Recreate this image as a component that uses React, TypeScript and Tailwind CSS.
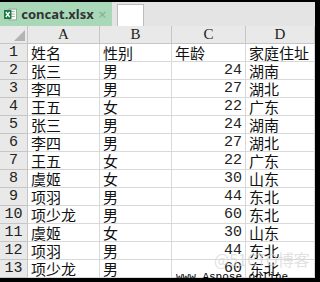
const rows: [string, string, string, string][] = [
  ["张三", "男", "24", "湖南"],
  ["李四", "男", "27", "湖北"],
  ["王五", "女", "22", "广东"],
  ["张三", "男", "24", "湖南"],
  ["李四", "男", "27", "湖北"],
  ["王五", "女", "22", "广东"],
  ["虞姬", "女", "30", "山东"],
  ["项羽", "男", "44", "东北"],
  ["项少龙", "男", "60", "东北"],
  ["虞姬", "女", "30", "山东"],
  ["项羽", "男", "44", "东北"],
  ["项少龙", "男", "60", "东北"],
];

const cjk = "font-['Noto_Sans_CJK_SC',sans-serif] text-[15px] leading-none text-[#111]";
const mono = "font-[Liberation_Mono,monospace] text-[15px] leading-none text-[#222]";
const serif = "font-[Liberation_Serif,serif] text-[15px] leading-none text-[#222]";
const grid = "grid grid-cols-[28px_72px_72px_74px_1fr]";

function ExcelIcon() {
  return (
    <svg width="16" height="15" viewBox="0 0 16 15">
      <rect x="6" y="1" width="9" height="13" fill="#fff" stroke="#8a9a8f" strokeWidth="1" />
      <line x1="8" y1="4" x2="13" y2="4" stroke="#7aa88a" />
      <line x1="8" y1="7" x2="13" y2="7" stroke="#7aa88a" />
      <line x1="8" y1="10" x2="13" y2="10" stroke="#7aa88a" />
      <rect x="0" y="2" width="9" height="11" fill="#1f7a45" />
      <path d="M2.2 4.5 L6.8 10.5 M6.8 4.5 L2.2 10.5" stroke="#fff" strokeWidth="1.6" />
    </svg>
  );
}

function RowHead({ n }: { n: number }) {
  return (
    <div className={`flex items-center justify-center bg-[#e9e9e9] border-r border-b border-[#c6c6c6] ${mono}`}>
      {n}
    </div>
  );
}

function Cell({ children, right, cls }: { children: React.ReactNode; right?: boolean; cls: string }) {
  return (
    <div className={`flex items-center border-r border-b border-[#d9d9d9] bg-white ${right ? "justify-end pr-[3px]" : "pl-[3px]"} ${cls}`}>
      {children}
    </div>
  );
}

export default function App() {
  return (
    <div className="relative w-[320px] h-[282px] overflow-hidden bg-white border-t-2 border-r-[5px] border-b-4 border-black">
      {/* tab strip */}
      <div className="h-[24px] flex items-end bg-[#e4e4e4]">
        <div className="h-[24px] w-[112px] flex items-center gap-[4px] pl-[4px] bg-[#a8d8b8]">
          <ExcelIcon />
          <span className="font-['Noto_Sans',sans-serif] font-bold text-[13px] text-[#333] leading-none">concat.xlsx</span>
          <span className="ml-auto mr-[5px] text-[11px] text-[#8fb09b] font-bold leading-none font-['DejaVu_Sans',sans-serif]">×</span>
        </div>
        <div className="ml-[5px] h-[22px] w-[27px] bg-white border border-b-0 border-[#bcbcbc]" />
      </div>

      {/* column headers */}
      <div className={`${grid} h-[18px]`}>
        <div className="relative bg-[#e9e9e9] border-r border-b border-[#c6c6c6]">
          <div className="absolute right-[2px] bottom-[2px] w-0 h-0 border-l-[11px] border-l-transparent border-b-[11px] border-b-[#b4b4b4]" />
        </div>
        {["A", "B", "C", "D"].map(c => (
          <div key={c} className={`flex items-center justify-center bg-[#e9e9e9] border-r border-b border-[#c6c6c6] ${serif}`}>
            {c}
          </div>
        ))}
      </div>

      {/* row 1 */}
      <div className={`${grid} h-[18px]`}>
        <RowHead n={1} />
        <Cell cls={cjk}>姓名</Cell>
        <Cell cls={cjk}>性别</Cell>
        <Cell cls={cjk}>年龄</Cell>
        <Cell cls={cjk}>家庭住址</Cell>
      </div>

      {rows.map((r, i) => (
        <div key={i} className={`${grid} h-[18px]`}>
          <RowHead n={i + 2} />
          <Cell cls={cjk}>{r[0]}</Cell>
          <Cell cls={cjk}>{r[1]}</Cell>
          <Cell right cls={mono}>{r[2]}</Cell>
          <Cell cls={cjk}>{r[3]}</Cell>
        </div>
      ))}

      {/* watermarks */}
      <div className="absolute left-[214px] top-[249px] font-['Noto_Sans_CJK_SC',sans-serif] text-[16px] leading-none text-[#d4d4d4]/70">
        @51CTO博客
      </div>
      <div className="absolute left-[176px] top-[270px] font-[Liberation_Mono,monospace] text-[11px] leading-none text-black whitespace-nowrap">
        www.Aspose.online
      </div>
    </div>
  );
}
